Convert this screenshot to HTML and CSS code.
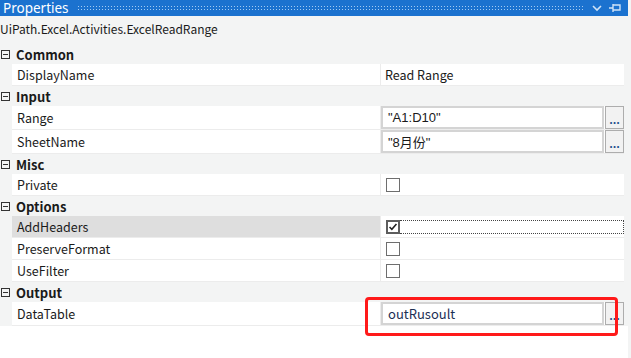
FILE: index.html
```html
<!DOCTYPE html>
<html lang="en">
<head>
  <meta charset="UTF-8">
  <title>Properties</title>
  <link rel="stylesheet" href="styles.css">
</head>
<body>
  <div class="panel">
    <header class="titlebar">
      <span class="title">Properties</span>
      <span class="grip"></span>
      <span class="tools">
        <svg width="12" height="8" viewBox="0 0 12 8"><path d="M2 2 L6 6 L10 2" fill="none" stroke="#cfe3f7" stroke-width="1.6"/></svg>
        <svg width="14" height="10" viewBox="0 0 14 10"><path d="M1 5 H5 M5 1 V9 M5 2 H12 V7 H5" fill="none" stroke="#cfe3f7" stroke-width="1.4"/></svg>
      </span>
    </header>

    <div class="subtitle">UiPath.Excel.Activities.ExcelReadRange</div>

    <div class="grid">
      <div class="cat"><span class="minus"></span>Common</div>
      <div class="row">
        <div class="name">DisplayName</div>
        <div class="value plain">Read Range</div>
      </div>

      <div class="cat"><span class="minus"></span>Input</div>
      <div class="row tall">
        <div class="name">Range</div>
        <div class="value"><span class="box">"A1:D10"</span><span class="more">...</span></div>
      </div>
      <div class="row tall">
        <div class="name">SheetName</div>
        <div class="value"><span class="box">"8月份"</span><span class="more">...</span></div>
      </div>

      <div class="cat"><span class="minus"></span>Misc</div>
      <div class="row">
        <div class="name">Private</div>
        <div class="value"><span class="check"></span></div>
      </div>

      <div class="cat"><span class="minus"></span>Options</div>
      <div class="row selected">
        <div class="name">AddHeaders</div>
        <div class="value"><span class="check checked">
          <svg width="13" height="13" viewBox="0 0 13 13"><path d="M2 6.5 L5 9.5 L11 2.5" fill="none" stroke="#222" stroke-width="2"/></svg>
        </span><span class="focus"></span></div>
      </div>
      <div class="row">
        <div class="name">PreserveFormat</div>
        <div class="value"><span class="check"></span></div>
      </div>
      <div class="row">
        <div class="name">UseFilter</div>
        <div class="value"><span class="check"></span></div>
      </div>

      <div class="cat"><span class="minus"></span>Output</div>
      <div class="row tall">
        <div class="name">DataTable</div>
        <div class="value"><span class="box out">outRusoult</span><span class="more">...</span></div>
      </div>
    </div>

    <div class="highlight"></div>
  </div>
</body>
</html>
```

FILE: styles.css
```css
:root {
  --blue: #1b72cf;
  --panel-bg: #f3f4f4;
  --line: #ececec;
  --text: #1a1a1a;
}

* {
  margin: 0;
  padding: 0;
  box-sizing: border-box;
}

body {
  font-family: "Noto Sans CJK SC", "Noto Sans", sans-serif;
  font-size: 12.5px;
  color: var(--text);
  background: #ffffff;
  width: 631px;
  height: 358px;
  overflow: hidden;
}

.panel {
  position: relative;
  width: 631px;
  height: 358px;
  border-right: 3px solid var(--panel-bg);
}

/* Title bar */
.titlebar {
  height: 16px;
  background: var(--blue);
  display: flex;
  align-items: center;
  padding-left: 3px;
  padding-right: 6px;
  color: #ffffff;
}

.title {
  font-family: "Noto Sans", sans-serif;
  font-size: 13.5px;
  line-height: 16px;
}

.grip {
  flex: 1;
  height: 6px;
  margin: 0 8px 0 8px;
  background-image: radial-gradient(circle, rgba(200, 225, 250, 0.8) 0.7px, transparent 0.8px);
  background-size: 3px 3px;
}

.tools {
  display: flex;
  align-items: center;
  gap: 5px;
}

.subtitle {
  height: 28px;
  line-height: 26px;
  background: var(--panel-bg);
  font-size: 12px;
}

/* Property grid */
.grid {
  background: var(--panel-bg);
  padding-right: 4px;
}

.cat {
  height: 20px;
  display: flex;
  align-items: center;
  font-weight: bold;
  font-size: 13px;
  background: var(--panel-bg);
}

.minus {
  width: 9px;
  height: 9px;
  border: 1px solid #333;
  margin: 0 6px 0 1px;
  position: relative;
}

.minus::after {
  content: "";
  position: absolute;
  left: 1px;
  right: 1px;
  top: 3px;
  height: 1px;
  background: #333;
}

.row {
  display: grid;
  grid-template-columns: 368px 1fr;
  margin-left: 12px;
  height: 22px;
  gap: 1px;
  background: var(--line);
  border-bottom: 1px solid var(--line);
}

.row.tall {
  height: 24px;
}

.name {
  background: #ffffff;
  padding-left: 5px;
  display: flex;
  align-items: center;
}

.row.selected .name {
  background: #dedede;
}

.value {
  background: #ffffff;
  display: flex;
  align-items: center;
}

.value.plain {
  padding-left: 4px;
}

.box {
  flex: 1;
  height: 100%;
  border: 2px solid #d4d4d4;
  padding-left: 5px;
  display: flex;
  align-items: center;
  font-family: "Liberation Sans", "Noto Sans CJK SC", sans-serif;
  font-size: 13px;
}

.box.out {
  font-family: "Noto Sans CJK SC", sans-serif;
  color: #1c2f55;
}

.more {
  width: 19px;
  height: 100%;
  margin-left: 1px;
  border: 1px solid #adadad;
  background: #f2f2f2;
  display: flex;
  align-items: flex-end;
  justify-content: center;
  padding-bottom: 4px;
  font-size: 11px;
  line-height: 10px;
  font-weight: bold;
  color: #1d4f8c;
}

.check {
  width: 14px;
  height: 14px;
  margin-left: 5px;
  border: 1px solid #6e6e6e;
  background: #ffffff;
  flex-shrink: 0;
}

.check.checked {
  border-width: 2px;
  border-color: #5d5d5d;
  display: flex;
  align-items: center;
  justify-content: center;
}

.check.checked svg {
  width: 12px;
  height: 12px;
}

.focus {
  flex: 1;
  height: 14px;
  border: 1px dotted #444;
  border-left: none;
}

/* Red annotation */
.highlight {
  position: absolute;
  left: 365px;
  top: 297px;
  width: 253px;
  height: 39px;
  border: 3px solid #ff1a1a;
  border-radius: 4px;
}
```
